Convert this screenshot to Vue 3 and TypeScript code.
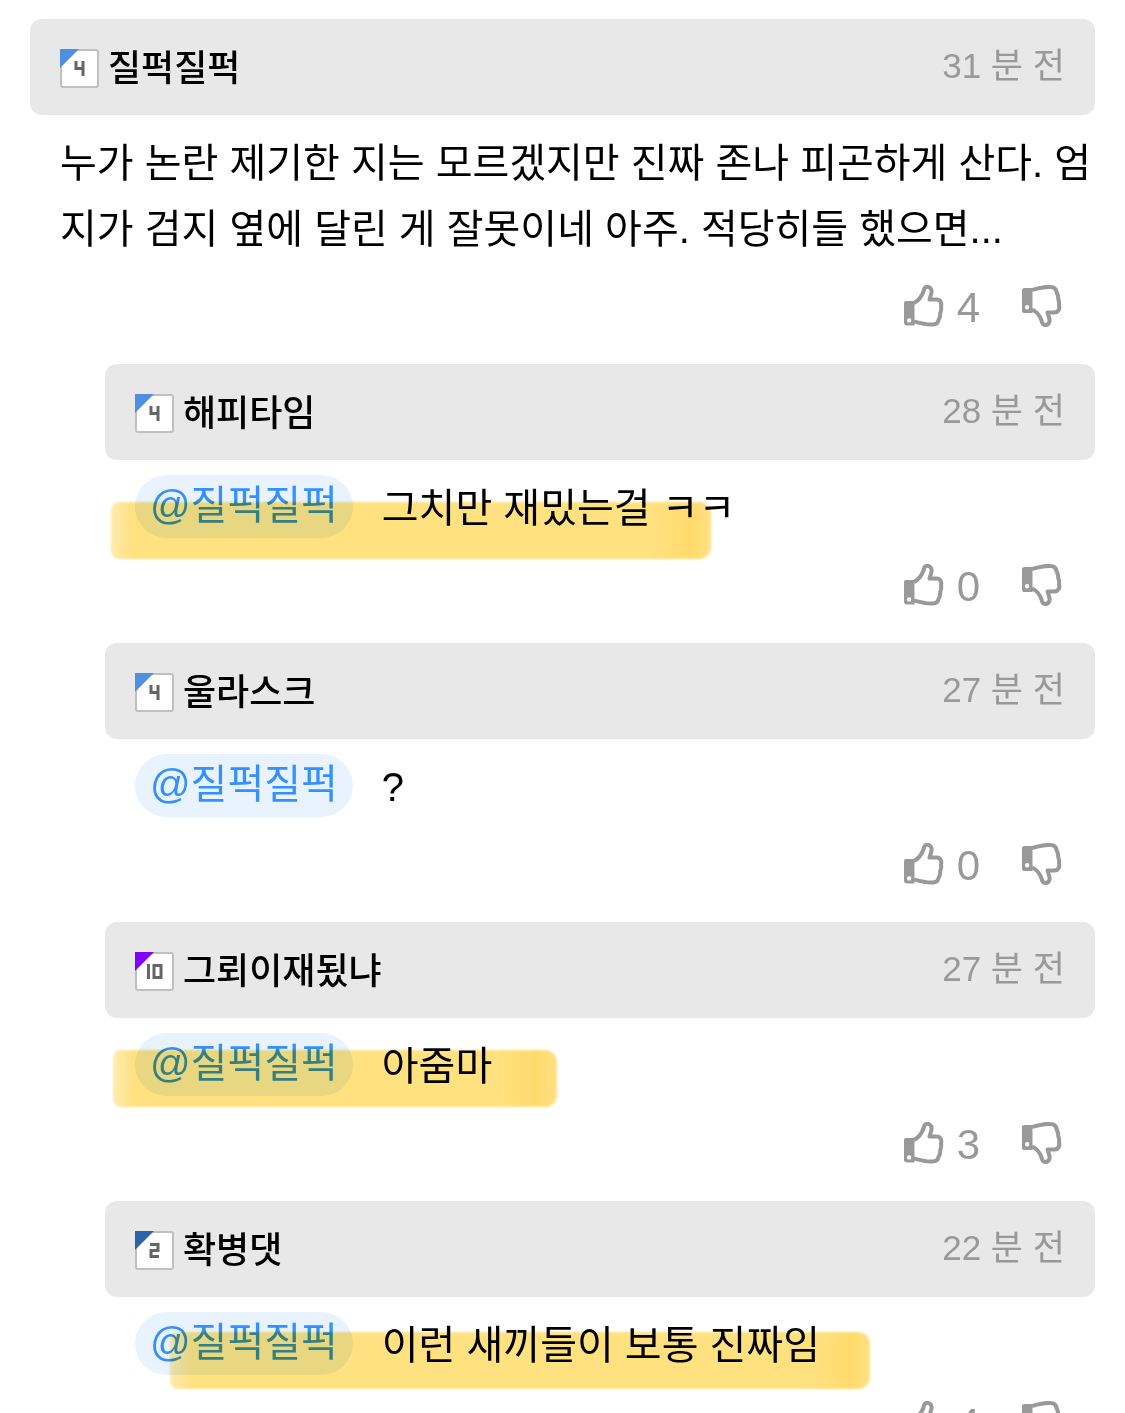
<script setup lang="ts">
interface Comment {
  id: number
  author: string
  level: number
  tone: string
  time: string
  mention?: string
  text: string
  likes: number
  mark?: string
}

const comments: Comment[] = [
  {
    id: 1,
    author: '질퍽질퍽',
    level: 4,
    tone: 'sky',
    time: '31 분 전',
    text: '누가 논란 제기한 지는 모르겠지만 진짜 존나 피곤하게 산다. 엄지가 검지 옆에 달린 게 잘못이네 아주. 적당히들 했으면...',
    likes: 4,
  },
  { id: 2, author: '해피타임', level: 4, tone: 'sky', time: '28 분 전', mention: '질퍽질퍽', text: '그치만 재밌는걸 ㅋㅋ', likes: 0, mark: 'mark-long' },
  { id: 3, author: '울라스크', level: 4, tone: 'sky', time: '27 분 전', mention: '질퍽질퍽', text: '?', likes: 0 },
  { id: 4, author: '그뢰이재됬냐', level: 10, tone: 'violet', time: '27 분 전', mention: '질퍽질퍽', text: '아줌마', likes: 3, mark: 'mark-short' },
  { id: 5, author: '확병댓', level: 2, tone: 'navy', time: '22 분 전', mention: '질퍽질퍽', text: '이런 새끼들이 보통 진짜임', likes: 4, mark: 'mark-wide' },
]

// Strokes of the pixel digits inside the level badge
const digits: Record<number, string> = {
  2: 'M15 13.5H23V19.5H16V25.5H24',
  4: 'M16 12V19.5H23M23 12V27',
  10: 'M13.5 12V27M19 13.5H26V25.5H19Z',
}
</script>

<template>
  <main class="thread">
    <article v-for="c in comments" :key="c.id" class="comment" :class="{ reply: c.mention }">
      <header class="head">
        <svg class="badge" :class="c.tone" viewBox="0 0 39 39" role="img" :aria-label="`레벨 ${c.level}`">
          <rect class="frame" x="1" y="1" width="37" height="37" rx="2" />
          <path class="corner" d="M0 0H19L0 19Z" />
          <path class="digit" :d="digits[c.level]" />
        </svg>
        <span class="author">{{ c.author }}</span>
        <time class="time">{{ c.time }}</time>
      </header>
      <div class="body">
        <a v-if="c.mention" class="mention" href="#">@{{ c.mention }}</a>
        <p class="text">{{ c.text }}</p>
        <span v-if="c.mark" class="mark" :class="c.mark" aria-hidden="true"></span>
      </div>
      <footer class="votes">
        <button class="vote" type="button" aria-label="추천">
          <svg class="thumb" viewBox="0 0 40 42" aria-hidden="true">
            <path class="cuff" fill-rule="evenodd" d="M2 16H10.5V40.5H3Q0 40.5 0 37.500V18Q0 16 2 16ZM5.200 33.200a2.200 2.200 0 1 0 0 4.400a2.200 2.200 0 0 0 0-4.400Z" />
            <path class="hand" d="M10 18C16 15 18 10.500 19.500 6.500C20 3.500 21 1.800 23 1.800C27 1.800 28.500 5.500 27 9.500L25.500 14.500H32.500C36.500 14.500 38 18 37 21.500C37.500 24 37 26.500 36.200 28C36.500 31 35.500 33.500 34.500 35C34 38.500 32 39.500 28.500 39.500C22 40 17 38.500 10 36.500" />
          </svg>
          <span class="count">{{ c.likes }}</span>
        </button>
        <button class="vote" type="button" aria-label="비추천">
          <svg class="thumb" viewBox="0 0 40 42" aria-hidden="true">
            <path class="cuff" fill-rule="evenodd" d="M3 3H10.500V28H2Q0 28 0 26V5Q0 3 3 3ZM5.200 20a2.200 2.200 0 1 0 0 4.400a2.200 2.200 0 0 0 0-4.400Z" />
            <path class="hand" d="M10 5C17 3 22 1.500 28.500 2C32 2 34 3.500 34.500 7C35.500 9 36.500 11 36.200 14C37 16 37.500 18 37 20.500C38 24 36.500 27 32.500 27.500H25.500L27 32.500C28.500 36.500 27 40 23 40C21 40 20 38.500 19.500 35.500C18 31 16 27 10 24.500" />
          </svg>
        </button>
      </footer>
    </article>
  </main>
</template>

<style>
body {
  margin: 0;
  background: #fff;
}
</style>

<style scoped>
.thread {
  box-sizing: border-box;
  height: 100vh;
  overflow: hidden;
  padding: 19px 30px 0;
  background: #fff;
  font-family: "Liberation Sans", "Noto Sans CJK KR", sans-serif;
  color: #000;
}

.reply {
  margin-left: 75px;
}

.head {
  display: flex;
  align-items: center;
  height: 96px;
  box-sizing: border-box;
  padding: 2px 30px 0;
  border-radius: 12px;
  background: #e8e8e8;
}

.badge {
  width: 39px;
  height: 39px;
  margin-right: 9px;
}

.frame {
  fill: #fff;
  stroke: #c0c0c0;
  stroke-width: 2;
}

.sky .corner {
  fill: #4f8fe0;
}

.violet .corner {
  fill: #8000ff;
}

.navy .corner {
  fill: #2d63a8;
}

.digit {
  fill: none;
  stroke: #666;
  stroke-width: 3;
}

.author {
  flex: 1;
  padding-top: 2px;
  font-size: 36px;
  font-weight: 500;
  line-height: 54px;
}

.time {
  padding-bottom: 4px;
  font-size: 35px;
  line-height: 54px;
  color: #999;
}

.body {
  position: relative;
  display: flex;
  align-items: flex-start;
  gap: 29px;
  padding: 15px 0 0 30px;
  font-size: 40px;
}

.text {
  margin: 0;
  line-height: 66px;
  word-break: break-all;
}

.mention {
  padding: 0 15px;
  border-radius: 32px;
  background: #e8f3ff;
  color: #3490ff;
  line-height: 60px;
  height: 63px;
  text-decoration: none;
}

.mark {
  position: absolute;
  height: 57px;
  border-radius: 8px 12px 12px 8px;
  background: linear-gradient(90deg, #ffebae 0, #ffe180 22px, #ffe180 calc(100% - 60px), #ffdb6c calc(100% - 20px), #ffe083 100%);
  filter: blur(1px);
  mix-blend-mode: multiply;
}

.mark-long {
  top: 42px;
  left: 6px;
  width: 600px;
}

.mark-short {
  top: 32px;
  left: 8px;
  width: 444px;
}

.mark-wide {
  top: 35px;
  left: 65px;
  width: 700px;
}

.votes {
  display: flex;
  justify-content: flex-end;
  gap: 42px;
  padding: 23px 33px 37px 0;
}

.vote {
  display: flex;
  align-items: center;
  gap: 13px;
  height: 42px;
  padding: 0;
  border: 0;
  background: none;
  color: #999;
  font-family: inherit;
}

.thumb {
  width: 40px;
  height: 42px;
}

.cuff {
  fill: #999;
}

.hand {
  fill: none;
  stroke: #999;
  stroke-width: 4;
  stroke-linejoin: round;
}

.count {
  padding-top: 4px;
  font-size: 42px;
  line-height: 42px;
}
</style>
